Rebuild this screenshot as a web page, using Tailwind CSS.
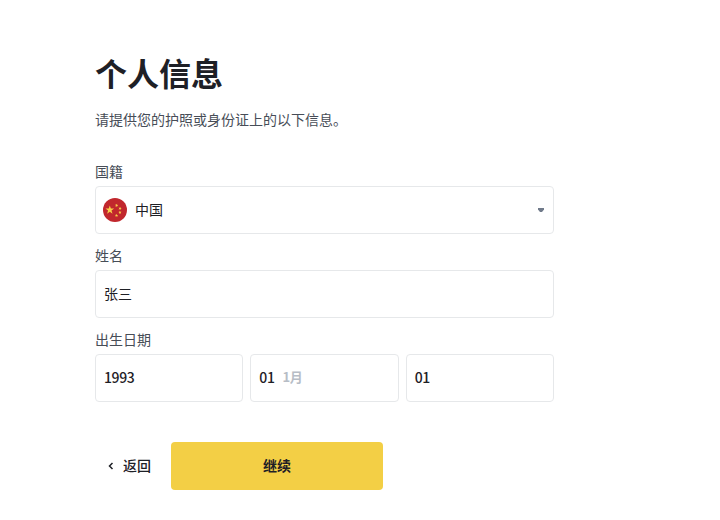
<!DOCTYPE html>
<html lang="zh-CN">
<head>
    <meta charset="UTF-8">
    <meta name="viewport" content="width=device-width, initial-scale=1.0">
    <title>个人信息</title>
    <script src="https://cdn.jsdelivr.net/npm/@tailwindcss/browser@4"></script>
</head>
<body class="bg-white text-[#1e2026] font-['Roboto','Noto_Sans_CJK_SC',sans-serif]">
    <div class="w-[554px] pl-[95px] pt-[55px]">
        <h1 class="text-[32px] leading-10 font-bold">个人信息</h1>
        <p class="mt-[15px] text-sm leading-5 text-[#474d57]">请提供您的护照或身份证上的以下信息。</p>

        <!-- Nationality -->
        <div class="mt-8">
            <div class="h-6 text-sm leading-5 text-[#474d57]">国籍</div>
            <div class="h-12 flex items-center border border-[#e6e8ea] rounded px-[7px]">
                <svg class="w-6 h-6" viewBox="0 0 24 24">
                    <circle cx="12" cy="12" r="12" fill="#c1272d"/>
                    <g fill="#f8d048">
                        <path d="M6.800 7.500l1.050 3.050h3.250l-2.600 1.950 1 3.150-2.700-1.900-2.700 1.900 1-3.150-2.600-1.950h3.250z"/>
                        <path d="M12.300 6.400l1.100.2.700-.8.100 1.100 1 .5-1 .5-.1 1.100-.8-.8-1.100.2.600-1z"/>
                        <path d="M15.700 9.500l1.100.2.700-.8.100 1.100 1 .5-1 .5-.1 1.100-.8-.8-1.100.2.600-1z"/>
                        <path d="M16.900 12.800l.5 1h1.100l-.8.800.4 1.100-1.100-.5-1 .6.200-1.200-.9-.7 1.100-.2z"/>
                        <path d="M13.500 15.900l.5 1h1.100l-.8.800.4 1.100-1.100-.5-1 .6.200-1.200-.9-.7 1.100-.2z"/>
                    </g>
                </svg>
                <span class="ml-2 text-sm">中国</span>
                <svg class="ml-auto w-[10px] h-2" viewBox="0 0 10 8"><path d="M2 2h6v1.500L6 6H4L2 3.500z" fill="#707a8a"/></svg>
            </div>
        </div>

        <!-- Name -->
        <div class="mt-3">
            <div class="h-6 text-sm leading-5 text-[#474d57]">姓名</div>
            <div class="h-12 flex items-center border border-[#e6e8ea] rounded px-2 text-sm">张三</div>
        </div>

        <!-- Date of birth -->
        <div class="mt-3">
            <div class="h-6 text-sm leading-5 text-[#474d57]">出生日期</div>
            <div class="grid grid-cols-3 gap-[7px] text-sm font-medium tracking-[-0.4px] font-['Noto_Sans_CJK_SC',sans-serif]">
                <div class="h-12 flex items-center border border-[#e6e8ea] rounded px-2 pb-0.5">1993</div>
                <div class="h-12 flex items-center border border-[#e6e8ea] rounded px-2 pb-0.5">01<span class="ml-2 text-[13px] text-[#b7bdc6] font-bold">1月</span></div>
                <div class="h-12 flex items-center border border-[#e6e8ea] rounded px-2 pb-0.5">01</div>
            </div>
        </div>

        <div class="mt-10 flex items-center text-sm font-medium">
            <button class="w-[76px] h-12 flex items-center pl-3">
                <svg class="w-2 h-2" viewBox="0 0 8 8"><path d="M5.500 1L2.500 4l3 3" fill="none" stroke="#1e2026" stroke-width="1.500"/></svg>
                <span class="ml-2">返回</span>
            </button>
            <button class="w-[212px] h-12 rounded bg-[#f3cf45] font-bold">继续</button>
        </div>
    </div>
</body>
</html>
